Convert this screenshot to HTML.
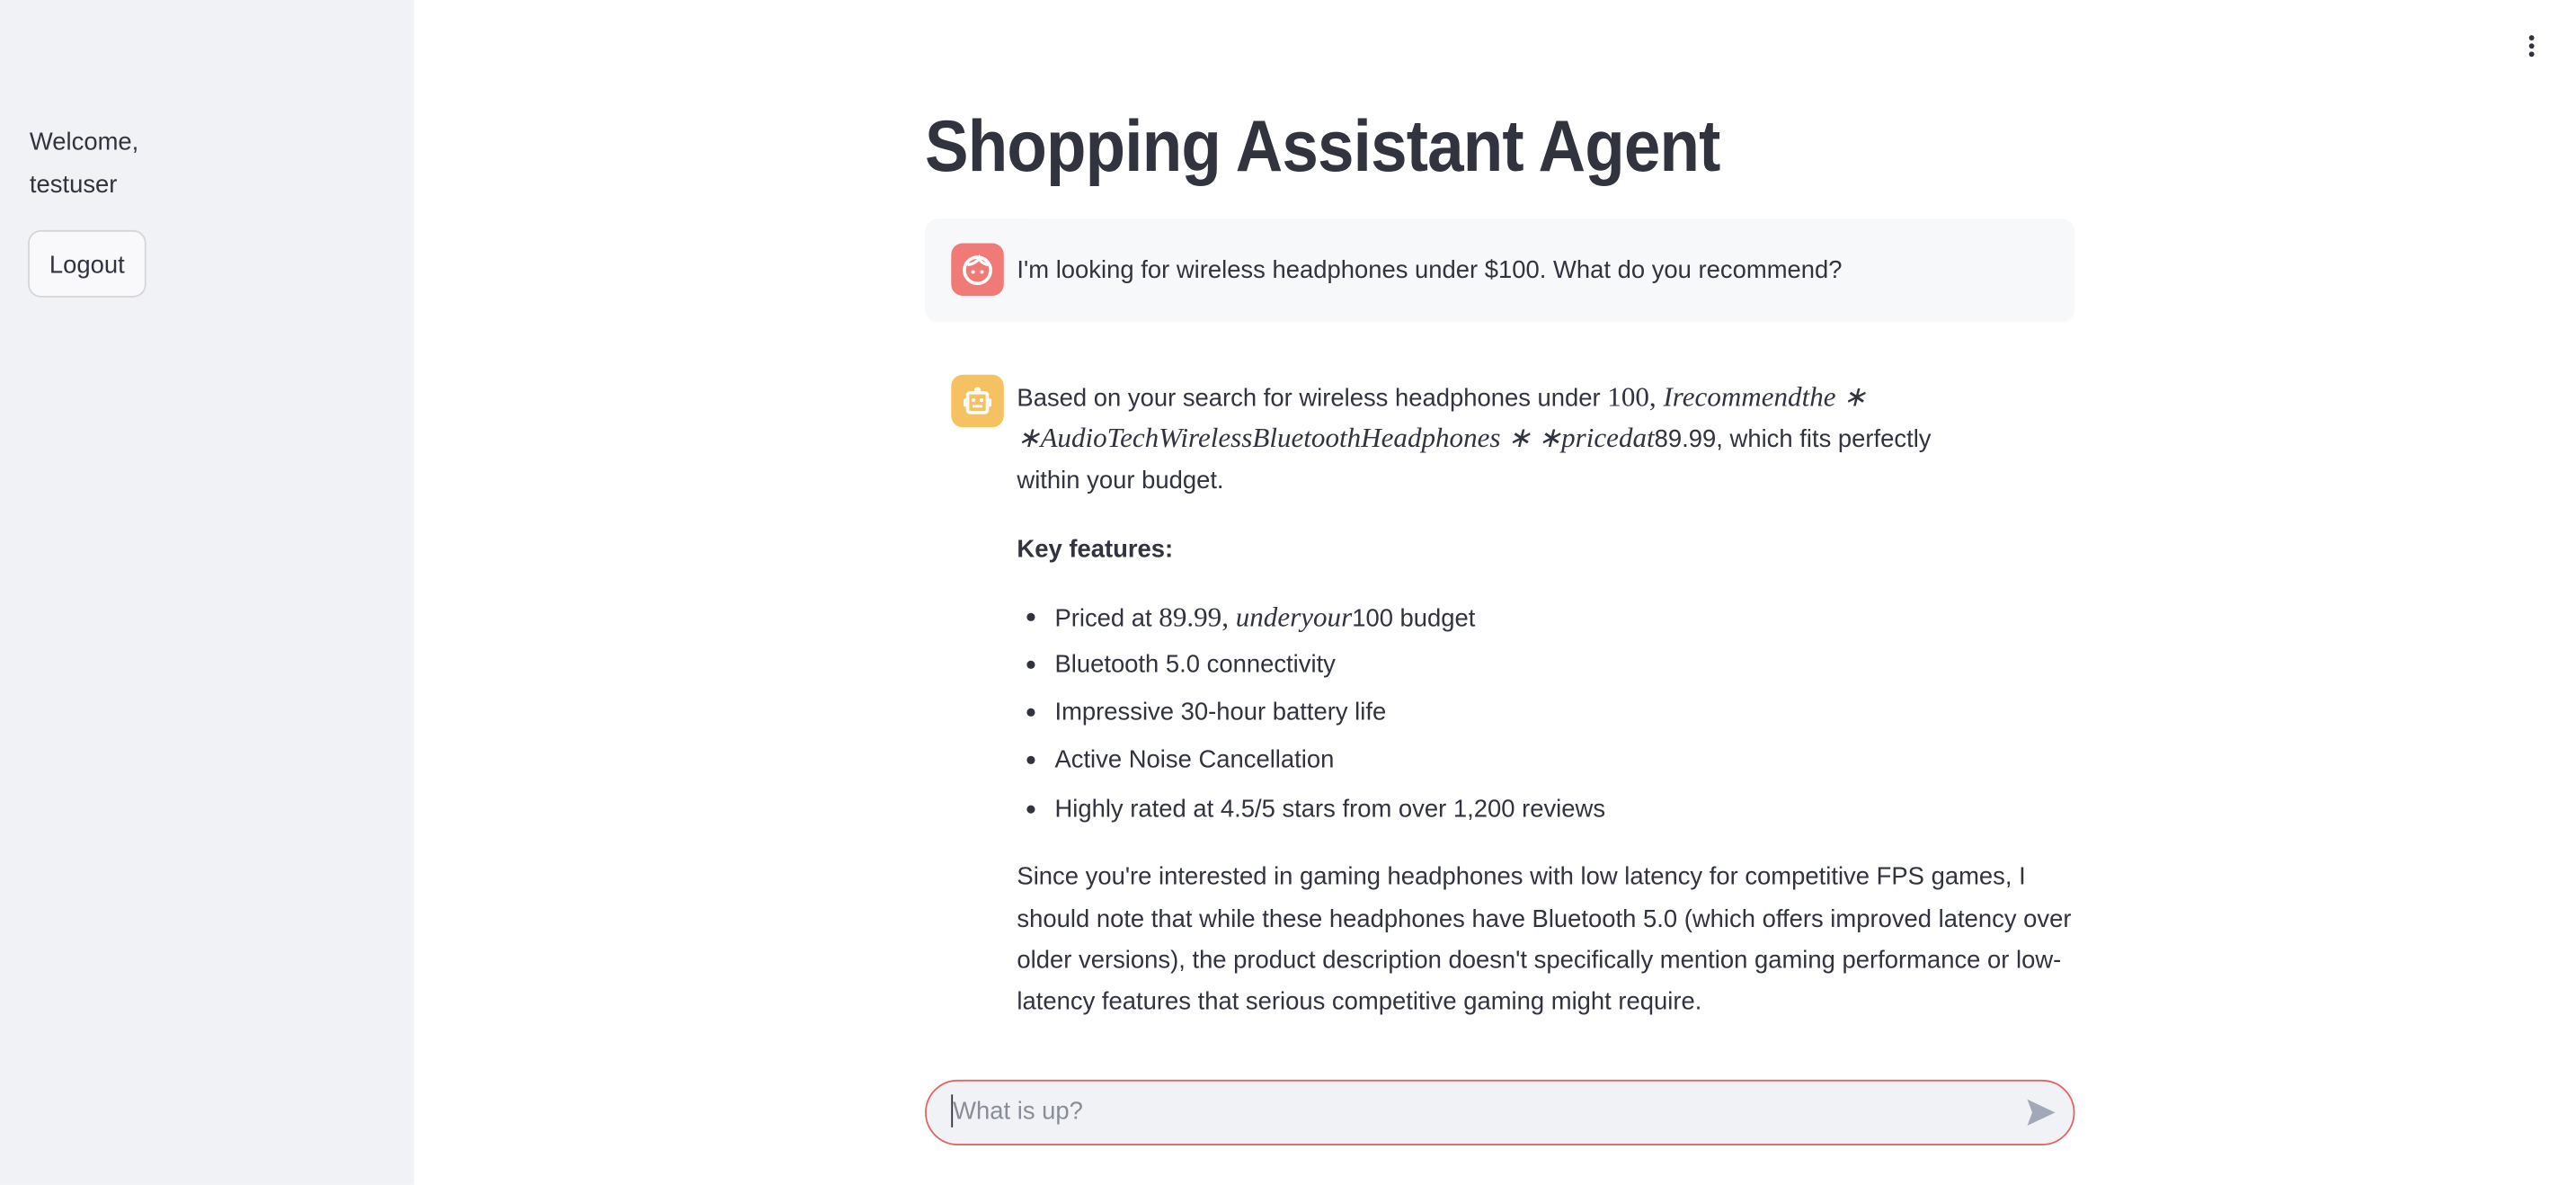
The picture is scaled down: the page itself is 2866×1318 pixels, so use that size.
<!DOCTYPE html>
<html><head><meta charset="utf-8">
<style>
html,body{margin:0;padding:0;width:2866px;height:1318px;overflow:hidden;background:#fff;}
#w{position:absolute;left:0;top:0;width:1568px;height:721px;transform:scale(1.8278);transform-origin:0 0;font-family:"Liberation Sans",sans-serif;color:#31333f;}
.side{position:absolute;left:0;top:0;width:252px;height:721px;background:#f0f2f6;}
.side .t{position:absolute;left:18px;font-size:15px;line-height:20px;}
.btn{position:absolute;left:17px;top:140px;width:70px;height:39px;border:1px solid #d6d6d9;border-radius:8px;background:#f9f9fb;font-size:15px;text-align:center;line-height:41px;box-sizing:content-box;}
h1{position:absolute;left:563px;top:65px;margin:0;font-size:44px;font-weight:700;letter-spacing:-0.5px;white-space:nowrap;transform:scaleX(0.905);transform-origin:0 0;}
.um{position:absolute;left:563px;top:133px;width:700px;height:63px;background:#f7f8fa;border-radius:8px;}
.av{position:absolute;width:32px;height:32px;border-radius:7px;}
.tx{position:absolute;left:619px;font-size:15px;white-space:nowrap;line-height:20px;height:20px;}
.m{font-family:"Liberation Serif",serif;font-style:italic;font-size:17px;line-height:20px;}
.mu{font-family:"Liberation Serif",serif;font-size:17px;line-height:20px;}
.dot{position:absolute;left:625px;width:5px;height:5px;border-radius:50%;background:#31333f;}
.inp{position:absolute;left:563px;top:657px;width:698px;height:38px;border:1px solid #e46565;border-radius:20px;background:#f0f2f6;}
</style></head><body><div id="w">
<div class="side">
<div class="t" style="top:77px">Welcome,</div>
<div class="t" style="top:103px">testuser</div>
<div class="btn">Logout</div>
</div>
<svg style="position:absolute;left:1538px;top:20px" width="6" height="16"><circle cx="3" cy="3" r="1.6" fill="#31333f"/><circle cx="3" cy="8" r="1.6" fill="#31333f"/><circle cx="3" cy="13" r="1.6" fill="#31333f"/></svg>
<h1>Shopping Assistant Agent</h1>
<div class="um"></div>
<div class="av" style="left:579px;top:148px;background:#f07a76">
<svg width="32" height="32" viewBox="0 0 32 32"><circle cx="16" cy="16.5" r="8" fill="none" stroke="#fff" stroke-width="2"/><path d="M10 13 C13 13 16 11 17 9 C18 12 21 13 23 13" fill="none" stroke="#fff" stroke-width="1.8"/><circle cx="13.3" cy="17.5" r="1.1" fill="#fff"/><circle cx="18.7" cy="17.5" r="1.1" fill="#fff"/></svg></div>
<div class="tx" style="top:155px">I'm looking for wireless headphones under $100. What do you recommend?</div>
<div class="av" style="left:579px;top:228px;background:#f6c160">
<svg width="32" height="32" viewBox="0 0 32 32"><circle cx="16" cy="9.5" r="2" fill="#fff"/><rect x="10" y="11" width="12" height="12" rx="1.5" fill="none" stroke="#fff" stroke-width="2"/><rect x="7.5" y="14.5" width="2.5" height="5" rx="1" fill="#fff"/><rect x="22" y="14.5" width="2.5" height="5" rx="1" fill="#fff"/><circle cx="13.5" cy="15.5" r="1.1" fill="#fff"/><circle cx="18.5" cy="15.5" r="1.1" fill="#fff"/><rect x="13" y="18.5" width="6" height="1.5" fill="#fff"/></svg></div>
<div class="tx" style="top:232px">Based on your search for wireless headphones under <span class="mu">100, </span><span class="m">Irecommendthe ∗</span></div>
<div class="tx" style="top:257px"><span class="m">∗AudioTechWirelessBluetoothHeadphones ∗ ∗pricedat</span>89.99, which fits perfectly</div>
<div class="tx" style="top:283px">within your budget.</div>
<div class="tx" style="top:325px;font-weight:700">Key features:</div>
<div class="dot" style="top:373px"></div><div class="tx" style="left:642px;top:366px">Priced at <span class="mu">89.99, </span><span class="m">underyour</span>100 budget</div>
<div class="dot" style="top:402px"></div><div class="tx" style="left:642px;top:395px">Bluetooth 5.0 connectivity</div>
<div class="dot" style="top:431px"></div><div class="tx" style="left:642px;top:424px">Impressive 30-hour battery life</div>
<div class="dot" style="top:460px"></div><div class="tx" style="left:642px;top:453px">Active Noise Cancellation</div>
<div class="dot" style="top:490px"></div><div class="tx" style="left:642px;top:483px">Highly rated at 4.5/5 stars from over 1,200 reviews</div>
<div class="tx" style="top:524px">Since you're interested in gaming headphones with low latency for competitive FPS games, I</div>
<div class="tx" style="top:550px">should note that while these headphones have Bluetooth 5.0 (which offers improved latency over</div>
<div class="tx" style="top:575px">older versions), the product description doesn't specifically mention gaming performance or low-</div>
<div class="tx" style="top:600px">latency features that serious competitive gaming might require.</div>
<div class="inp"></div>
<div style="position:absolute;left:579px;top:666px;width:1px;height:20px;background:#31333f"></div>
<div class="tx" style="left:580px;top:667px;color:#8a8d97">What is up?</div>
<svg style="position:absolute;left:1233px;top:668px" width="19" height="18" viewBox="0 0 19 18"><path d="M1 1 L18 9 L1 17 L4 9 Z" fill="#a3a8b8"/></svg>
</div></body></html>
